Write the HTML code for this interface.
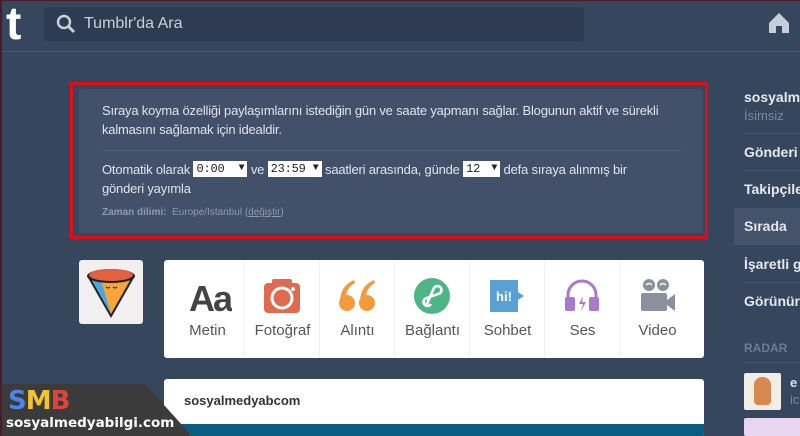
<!DOCTYPE html>
<html><head><meta charset="utf-8"><style>
*{margin:0;padding:0;box-sizing:border-box}
body{width:800px;height:436px;overflow:hidden;background:#36465d;font-family:"Liberation Sans",Arial,sans-serif;position:relative}
.abs{position:absolute}
.hdr{left:0;top:0;width:800px;height:52px;border-bottom:1px solid #4b5a70}
.t{left:6px;top:-4px;color:#fff;font-weight:bold;font-size:46px;font-family:"Liberation Sans",sans-serif}
.search{left:44px;top:7px;width:540px;height:34px;background:#2e3c51;border-radius:3px;color:#c9d0da;font-size:16px;line-height:34px;padding-left:40px}
.red{left:70px;top:82px;width:638px;height:157px;border:3px solid #e10d16}
.panel{left:79px;top:89px;width:624px;height:144px;background:#435069;border-radius:3px;color:#dfe4ea;font-size:13px;line-height:19px}
.sel{display:inline-block;position:relative;white-space:nowrap;background:#fff;color:#222;font-family:"Liberation Mono",monospace;font-size:12px;line-height:16px;height:16px;padding:0 3px;vertical-align:middle;margin-top:-3px}
.sel i{position:absolute;right:3px;top:0;font-style:normal;font-size:10px}
.side{left:734px;color:#e5e8ed;font-weight:bold;font-size:14px;padding-left:10px;width:70px;white-space:nowrap;overflow:hidden}
.div{left:744px;width:60px;height:1px;background:#46556c}
.wbox{background:#fff;border-radius:3px}
.col{position:absolute;top:0;width:75px;height:98px;text-align:center;border-right:1px solid #f0f0f0}
.col .lb{position:absolute;top:62px;left:0;width:75px;color:#555;font-size:15px}
.col svg{position:absolute;left:18px;top:18px}
</style></head><body>
<div class="abs hdr"></div>
<div class="abs t">t</div>
<div class="abs search">Tumblr'da Ara</div>
<svg class="abs" style="left:56px;top:14px" width="20" height="20" viewBox="0 0 20 20"><circle cx="8" cy="8" r="6" fill="none" stroke="#c9d0da" stroke-width="2.4"/><path d="M12.5 12.5L18 18" stroke="#c9d0da" stroke-width="2.8"/></svg>
<svg class="abs" style="left:768px;top:12px" width="22" height="22" viewBox="0 0 22 22"><path d="M1 11L11 1L21 11V21H14V14H8V21H1Z" fill="#c8ced8"/></svg>

<div class="abs red"></div>
<div class="abs panel">
<div style="position:absolute;left:23px;top:12px;width:590px;letter-spacing:-0.2px">Sıraya koyma özelliği paylaşımlarını istediğin gün ve saate yapmanı sağlar. Blogunun aktif ve sürekli kalmasını sağlamak için idealdir.</div>
<div style="position:absolute;left:23px;top:61px;width:580px;height:1px;background:#55627a"></div>
<div style="position:absolute;left:23px;top:71px;width:560px;letter-spacing:-0.2px">Otomatik olarak <span class="sel" style="width:54px">0:00<i>▼</i></span> ve <span class="sel" style="width:54px">23:59<i>▼</i></span> saatleri arasında, günde <span class="sel" style="width:37px">12<i>▼</i></span> defa sıraya alınmış bir<br>gönderi yayımla</div>
<div style="position:absolute;left:23px;top:114px;font-size:10px;color:#8f9aab"><b>Zaman dilimi:</b>&nbsp; Europe/Istanbul (<u>değiştir</u>)</div>
</div>

<div class="abs side" style="top:89px">sosyalm<div style="font-weight:normal;color:#7d8899;font-size:13px;margin-top:3px">İsimsiz</div></div>
<div class="abs div" style="top:133px"></div>
<div class="abs side" style="top:144px">Gönderi</div>
<div class="abs div" style="top:170px"></div>
<div class="abs side" style="top:181px">Takipçile</div>
<div class="abs" style="left:734px;top:208px;width:70px;height:37px;background:#45536a"></div>
<div class="abs side" style="top:218px">Sırada</div>
<div class="abs side" style="top:256px">İşaretli g</div>
<div class="abs div" style="top:282px"></div>
<div class="abs side" style="top:293px">Görünür</div>
<div class="abs side" style="top:341px;font-size:12px;color:#6f7b8e">RADAR</div>
<div class="abs div" style="top:362px"></div>
<div class="abs" style="left:744px;top:373px;width:37px;height:37px;background:#f3ede8;border-radius:2px"><div style="margin:4px 10px;width:17px;height:28px;background:#d98850;border-radius:8px 8px 4px 4px"></div></div>
<div class="abs" style="left:790px;top:375px;color:#dfe3ea;font-weight:bold;font-size:13px">e</div>
<div class="abs" style="left:790px;top:392px;color:#7d8899;font-size:13px">ic</div>
<div class="abs" style="left:744px;top:418px;width:60px;height:18px;background:#e8d5ef;border-radius:2px"></div>

<div class="abs" style="left:79px;top:260px;width:64px;height:64px;background:#f1eff0;border-radius:3px">
<svg width="64" height="64" viewBox="0 0 64 64"><path d="M8 16L32 58L56 16Z" fill="#222"/><path d="M11 17L32 54L53 17Z" fill="#f7a53a"/><path d="M11 17L32 54L22 20Z" fill="#4aa8e0"/><ellipse cx="32" cy="16" rx="24" ry="7" fill="#222"/><ellipse cx="32" cy="15" rx="22" ry="6" fill="#e2623f"/><path d="M27 27q2 2 4 0M34 27q2 2 4 0" stroke="#222" fill="none"/></svg></div>

<div class="abs wbox" style="left:164px;top:260px;width:540px;height:98px">
<div class="col" style="left:6px"><svg width="44" height="36" viewBox="0 0 44 36"><text x="22" y="33" text-anchor="middle" font-family="Liberation Sans" font-weight="bold" font-size="36" fill="#444" letter-spacing="-2">Aa</text></svg><div class="lb">Metin</div></div>
<div class="col" style="left:81px"><svg width="38" height="36" viewBox="0 0 38 36"><rect x="1" y="5" width="36" height="30" rx="4" fill="#e06a50"/><rect x="9" y="1" width="20" height="8" rx="2" fill="#e06a50"/><circle cx="19" cy="20" r="10" fill="none" stroke="#fff" stroke-width="3"/><circle cx="30" cy="11" r="2" fill="#fff"/></svg><div class="lb">Fotoğraf</div></div>
<div class="col" style="left:156px"><svg width="38" height="36" viewBox="0 0 38 36"><circle cx="9" cy="25" r="8" fill="#f29a3c"/><path d="M2 24Q2 8 16 2L17 5Q8 10 8 20Z" fill="#f29a3c"/><circle cx="29" cy="25" r="8" fill="#f29a3c"/><path d="M22 24Q22 8 36 2L37 5Q28 10 28 20Z" fill="#f29a3c"/></svg><div class="lb">Alıntı</div></div>
<div class="col" style="left:231px"><svg width="38" height="36" viewBox="0 0 38 36"><circle cx="19" cy="18" r="18" fill="#4fb487"/><path d="M13 28L21 10A4 4 0 1 1 25 16L14 20A4 4 0 1 0 18 26" fill="none" stroke="#fff" stroke-width="2.6"/></svg><div class="lb">Bağlantı</div></div>
<div class="col" style="left:306px"><svg width="38" height="36" viewBox="0 0 38 36"><path d="M2 2H30V14L36 18L30 22V34H2Z" fill="#5aa2d5"/><text x="16" y="23" text-anchor="middle" font-family="Liberation Sans" font-weight="bold" font-size="13" fill="#fff">hi!</text></svg><div class="lb">Sohbet</div></div>
<div class="col" style="left:381px"><svg width="38" height="36" viewBox="0 0 38 36"><path d="M5 22V17A14 14 0 0 1 33 17V22" fill="none" stroke="#a979cc" stroke-width="3"/><rect x="2" y="19" width="10" height="14" rx="2" fill="#a979cc"/><rect x="26" y="19" width="10" height="14" rx="2" fill="#a979cc"/><path d="M20 18L16 26H20L18 33L23 24H19Z" fill="#a979cc"/></svg><div class="lb">Ses</div></div>
<div class="col" style="left:456px;border:none"><svg width="38" height="36" viewBox="0 0 38 36"><circle cx="11" cy="7" r="6" fill="#8a919c"/><circle cx="25" cy="7" r="6" fill="#8a919c"/><path d="M8 7q3 -3 6 0M22 7q3 -3 6 0" stroke="#fff" stroke-width="1.5" fill="none"/><rect x="3" y="15" width="26" height="18" rx="2" fill="#8a919c"/><path d="M29 22L37 16V33L29 27Z" fill="#8a919c"/></svg><div class="lb">Video</div></div>
</div>

<div class="abs wbox" style="left:164px;top:379px;width:540px;height:57px;overflow:hidden">
<div style="position:absolute;left:20px;top:14px;font-size:13px;font-weight:bold;color:#333">sosyalmedyabcom</div>
<div style="position:absolute;left:0;top:45px;width:540px;height:12px;background:#0a5d80"></div>
</div>

<svg class="abs" style="left:0;top:384px" width="192" height="52" viewBox="0 0 192 52"><path d="M0 0H145L192 52H0Z" fill="#3b3b3c"/></svg>
<div class="abs" style="left:8px;top:386px;font-family:'DejaVu Sans',sans-serif;font-weight:bold;font-size:26px;line-height:30px;letter-spacing:-1px"><span style="color:#4a86e8">S</span><span style="color:#f1c232">M</span><span style="color:#e0443e">B</span></div>
<div class="abs" style="left:6px;top:415px;color:#fff;font-family:'DejaVu Sans',sans-serif;font-weight:bold;font-size:13.5px">sosyalmedyabilgi.com</div>
<div class="abs" style="left:0;top:0;width:800px;height:436px;border-left:2px solid #4a1c2a;border-top:1px solid #4a1c2a;pointer-events:none"></div>
</body></html>
